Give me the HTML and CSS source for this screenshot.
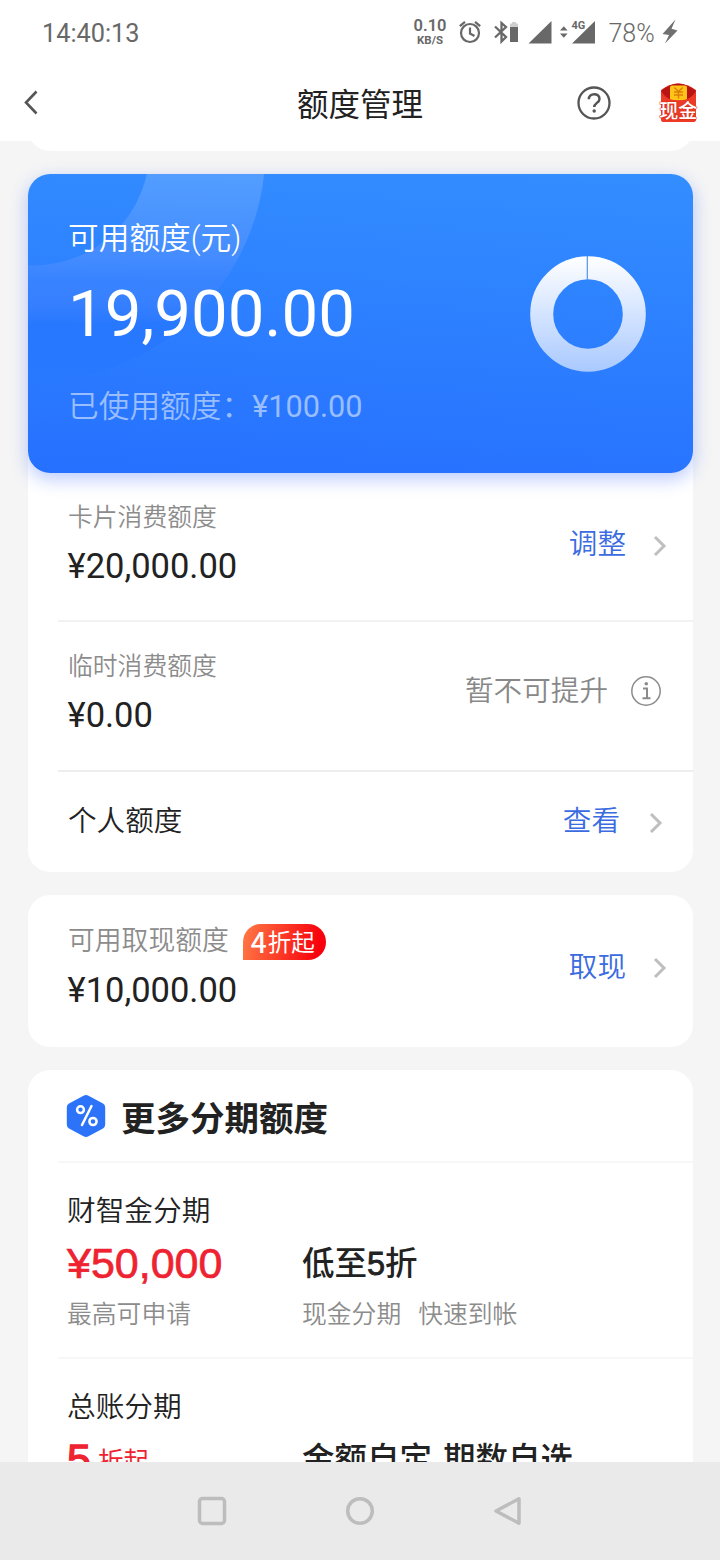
FILE: index.html
```html
<!DOCTYPE html>
<html lang="zh-CN">
<head>
<meta charset="utf-8">
<title>额度管理</title>
<link rel="stylesheet" href="styles.css">
</head>
<body>
<div class="screen">
  <div class="statusbar">
    <span class="clock">14:40:13</span>
    <div class="speed"><b class="speed-value">0.10</b><b class="speed-unit">KB/S</b></div>
    <svg class="status-icons" width="280" height="40" viewBox="440 12 280 40">
      <g fill="none" stroke="#686868" stroke-width="2.2">
        <circle cx="470" cy="33" r="9"/>
        <path d="M470 27.500v6l4.500 2.500M459.800 26.200l5.200-4.400M480.200 26.200l-5.200-4.400"/>
        <path d="M495 26.500l11 10.500-4.500 4.500V23l4.500 4-11 10.500" stroke-width="2.300"/>
      </g>
      <path d="M510 27h8v15h-8z" fill="#686868"/>
      <path d="M510 23.500h2v-1.500h4v1.500h2V27h-8z" fill="#cfcfcf"/>
      <path d="M528.500 43.500L551.500 21v22.500zM572 43.500L595 21v22.500z" fill="#686868"/>
      <path d="M560 30.500l3.800-4.300 3.800 4.300zM560 33.500l3.800 4.300 3.800-4.300z" fill="#686868"/>
      <path d="M571 19h15v8.500l-4.500 3H571z" fill="#fff"/>
      <path d="M675.500 19.500l-13 14.500 6.500 1-4 8.500 12.500-13-6-1.800z" fill="#707070"/>
      <text class="net" x="571.500" y="28.500">4G</text>
      <text class="battery" x="608.500" y="42">78%</text>
    </svg>
  </div>
  <div class="titlebar">
    <svg class="back" width="24" height="30" viewBox="20 88 24 30"><path d="M36.500 91.500L26 102.500l10.500 11" fill="none" stroke="#555" stroke-width="2.600"/></svg>
    <h1 class="title">额度管理</h1>
    <svg class="help" width="36" height="36" viewBox="0 0 36 36">
      <circle cx="18" cy="18" r="15.500" fill="none" stroke="#555" stroke-width="2.300"/>
      <path d="M12.800 14.300c0-6.800 10.700-6.800 10.700-.4 0 3.900-5.300 4.100-5.300 8.200" fill="none" stroke="#555" stroke-width="2.500"/>
      <circle cx="18.200" cy="26" r="1.700" fill="#555"/>
    </svg>
    <svg class="cash" width="42" height="42" viewBox="657 82 42 42">
      <path d="M661 90q17-13 35 0v29q0 3-3 3h-29q-3 0-3-3z" fill="#e93422"/>
      <path d="M661 91q17-15 35 0-6 10-17.500 10T661 91z" fill="#b91414"/>
      <rect x="670" y="85.500" width="17" height="15" rx="2" fill="#ffc516"/>
      <path d="M674.300 87.500l4.200 4 4.200-4M678.500 91.500v7M674 92h9M674 95h9" fill="none" stroke="#df7c0c" stroke-width="1.400"/>
      <path d="M661 94q7 6.500 17.500 6.500T696 94v25q0 3-3 3h-29q-3 0-3-3z" fill="#ec3a27"/>
      <text class="cash-text" x="659.300" y="118">现金</text>
    </svg>
  </div>
  <main class="content">
    <div class="tail"></div>
    <section class="card limits">
      <div class="hero">
        <svg class="arc" width="665" height="299" viewBox="28 174 665 299">
          <defs><linearGradient id="fade" gradientUnits="userSpaceOnUse" x1="0" y1="174" x2="0" y2="382">
            <stop offset="0" stop-color="#fff" stop-opacity=".16"/>
            <stop offset=".4" stop-color="#c8c0ff" stop-opacity=".14"/>
            <stop offset=".52" stop-color="#8090ff" stop-opacity=".12"/>
            <stop offset=".72" stop-color="#2070ff" stop-opacity=".4"/>
            <stop offset="1" stop-color="#2878ff" stop-opacity=".45"/>
          </linearGradient></defs>
          <circle cx="33" cy="149" r="174.500" fill="none" stroke="url(#fade)" stroke-width="116"/>
        </svg>
        <div class="hero-text">
          <div class="hero-label">可用额度(元)</div>
          <div class="hero-amount">19,900.00</div>
          <div class="hero-used">已使用额度：<span class="used-num">¥100.00</span></div>
        </div>
        <svg class="ring" width="116" height="116" viewBox="0 0 116 116">
          <defs><linearGradient id="ringfill" gradientUnits="userSpaceOnUse" x1="0" y1="0" x2="0" y2="116">
            <stop offset="0" stop-color="#fff"/><stop offset="1" stop-color="#a9c9ff"/>
          </linearGradient></defs>
          <circle cx="58" cy="58" r="46.300" fill="none" stroke="url(#ringfill)" stroke-width="23"/>
          <path d="M57.300 0v24" stroke="#4f93f0" stroke-width="1.200"/>
        </svg>
      </div>
      <div class="row row-first">
        <div class="info"><div class="label">卡片消费额度</div><div class="money">¥20,000.00</div></div>
        <div class="action link">调整<svg class="chev" width="14" height="22" viewBox="0 0 14 22"><path d="M2 2l9 9-9 9" fill="none" stroke="#bfbfbf" stroke-width="3"/></svg></div>
      </div>
      <div class="row row-temp">
        <div class="info"><div class="label">临时消费额度</div><div class="money">¥0.00</div></div>
        <div class="action muted">暂不可提升<svg class="tip" width="32" height="32" viewBox="0 0 32 32"><circle cx="16" cy="16" r="14.200" fill="none" stroke="#8b8b8b" stroke-width="1.500"/><path d="M13 13.500h4V23M12.500 23.200h8" fill="none" stroke="#8b8b8b" stroke-width="2"/><circle cx="16.300" cy="8.800" r="1.800" fill="#8b8b8b"/></svg></div>
      </div>
      <div class="row row-personal">
        <div class="name">个人额度</div>
        <div class="action link">查看<svg class="chev" width="14" height="22" viewBox="0 0 14 22"><path d="M2 2l9 9-9 9" fill="none" stroke="#bfbfbf" stroke-width="3"/></svg></div>
      </div>
    </section>
    <section class="card withdraw">
      <div class="info">
        <div class="label label-lg">可用取现额度<span class="badge"><span class="badge-num">4</span>折起</span></div>
        <div class="money">¥10,000.00</div>
      </div>
      <div class="action link">取现<svg class="chev" width="14" height="22" viewBox="0 0 14 22"><path d="M2 2l9 9-9 9" fill="none" stroke="#bfbfbf" stroke-width="3"/></svg></div>
    </section>
    <section class="card more">
      <div class="more-head">
        <svg width="40" height="44" viewBox="0 0 40 44">
          <path d="M17.500 1.800q2.500-1.400 5 0L37 9.600q2.200 1.300 2.200 3.800v17.200q0 2.500-2.200 3.800l-14.500 7.800q-2.500 1.400-5 0L3 34.400Q.8 33.100.8 30.600V13.400Q.8 10.900 3 9.600z" fill="#2d73fa"/>
          <g fill="none" stroke="#fff" stroke-width="2.500" stroke-linecap="round"><circle cx="14.500" cy="15.700" r="3.400"/><circle cx="27" cy="27.500" r="3.600"/><path d="M25.500 12L16 31"/></g>
        </svg>
        <h2 class="more-title">更多分期额度</h2>
      </div>
      <div class="plan">
        <div class="plan-name">财智金分期</div>
        <div class="plan-main"><span class="price">¥50,000</span><span class="offer">低至<span class="offer-num">5</span>折</span></div>
        <div class="plan-sub"><span class="sub-left">最高可申请</span><span>现金分期</span><span class="sub-second">快速到帐</span></div>
      </div>
      <div class="plan">
        <div class="plan-name">总账分期</div>
        <div class="plan-main"><span class="price rate"><span class="rate-num">5</span><span class="rate-unit">折起</span></span><span class="offer">金额自定 期数自选</span></div>
      </div>
    </section>
  </main>
  <nav class="navbar">
    <svg width="30" height="30" viewBox="0 0 30 30"><rect x="2.500" y="2.500" width="25" height="25" rx="3" fill="none" stroke="#bdbdbd" stroke-width="3.500"/></svg>
    <svg width="30" height="30" viewBox="0 0 30 30"><circle cx="15" cy="15" r="12.300" fill="none" stroke="#bdbdbd" stroke-width="3.500"/></svg>
    <svg width="30" height="30" viewBox="0 0 30 30"><path d="M3 15L26 2.800v24.400z" fill="none" stroke="#bdbdbd" stroke-width="3.500" stroke-linejoin="round"/></svg>
  </nav>
</div>
</body>
</html>
```
FILE: styles.css
```css
* { box-sizing: border-box; }
body { margin: 0; font-family: Roboto, "Noto Sans CJK SC", sans-serif; color: #222; }
svg { display: block; flex: none; }
.screen { width: 720px; height: 1560px; display: flex; flex-direction: column; background: #f5f5f5; overflow: hidden; white-space: nowrap; }

.statusbar { flex: none; height: 64px; background: #fff; display: flex; padding: 12px 0 0 42px; color: #686868; }
.clock { width: 370px; font-size: 25.300px; line-height: 43px; font-weight: 380; }
.speed { width: 36px; margin-right: -8px; display: flex; flex-direction: column; align-items: center; padding-top: 5px; }
.speed-value { font-size: 16.500px; line-height: 17px; font-weight: 600; }
.speed-unit { font-size: 11.500px; line-height: 12px; }
.net { font-size: 11px; font-weight: 700; fill: #686868; }
.battery { font-size: 25px; font-weight: 350; fill: #686868; }

.titlebar { flex: none; height: 77px; background: #fff; display: flex; align-items: flex-start; padding: 0 21px 0 20px; }
.back { margin-top: 24px; }
.title { margin: 17px 0 0 253px; width: 279px; font-size: 31.500px; line-height: 49px; font-weight: 400; }
.help { margin-top: 21px; }
.cash { margin: 18px 0 0 45px; }
.cash-text { font-size: 19px; font-weight: 500; fill: #fff; stroke: #d83020; stroke-width: 1px; paint-order: stroke; }

.content { flex: 1; min-height: 0; overflow: hidden; padding: 0 27px 0 28px; display: flex; flex-direction: column; }
.tail { flex: none; height: 24px; margin: -14px 0 23px; background: #fff; border-radius: 0 0 22px 22px; }
.card { flex: none; background: #fff; border-radius: 22px; margin-bottom: 23px; }

.hero { position: relative; height: 299px; border-radius: 22px; background: linear-gradient(176deg, #338eff, #2670ff); background: linear-gradient(184deg, #338eff, #2670ff); box-shadow: 0 6px 18px rgba(40, 90, 255, .32); display: flex; color: #fff; padding: 40px 47px 0 40px; justify-content: space-between; }
.arc { position: absolute; left: 0; top: 0; border-radius: 22px; }
.hero-text { position: relative; }
.hero-label { font-size: 30.700px; line-height: 50px; font-weight: 350; }
.hero-amount { font-size: 65.300px; line-height: 100px; height: 100px; font-weight: 400; }
.hero-used { font-size: 30.700px; line-height: 50px; margin-top: 18px; color: #98beff; font-weight: 350; }
.used-num { font-weight: 400; }
.ring { position: relative; margin-top: 42px; }

.row { display: flex; justify-content: space-between; margin-left: 30px; padding-left: 10px; }
.row-first { height: 147px; padding-top: 25px; }
.row-temp { height: 150px; border-top: 2px solid #f2f2f2; padding-top: 25px; }
.row-personal { height: 102px; border-top: 2px solid #eee; padding-top: 24px; }
.label { font-size: 24.800px; line-height: 40px; color: #8c8c8c; font-weight: 350; }
.label-lg { font-size: 26.800px; display: flex; }
.money { font-size: 34.500px; line-height: 56px; margin-left: -.5px; }
.name { font-size: 28.600px; line-height: 50px; font-weight: 350; }
.action { display: flex; font-size: 28.600px; line-height: 50px; font-weight: 350; }
.link { color: #3b6be0; }
.muted { color: #888; }
.chev { margin: 17px 26px 0 27px; }
.row-first .action { padding-top: 20px; line-height: 52px; }
.row-temp .action { padding-top: 19px; }
.row-personal .chev { margin: 16px 30px 0 29px; }
.tip { margin: 9px 31px 0 22px; }

.withdraw { height: 152px; padding: 26px 0 0 40px; display: flex; justify-content: space-between; }
.withdraw .money { line-height: 58px; }
.withdraw .action { padding-top: 21px; }
.withdraw .chev { margin-top: 15px; }
.badge { width: 83px; height: 36px; margin: 3px 0 0 14px; padding-left: 8px; border-radius: 18px 18px 18px 0; background: linear-gradient(100deg, #ff7a45, #f8000c 90%); color: #fff; font-size: 23.500px; line-height: 38px; font-weight: 400; display: flex; }
.badge-num { width: 17px; font: 500 28px/34px "Noto Sans CJK SC", sans-serif; }

.more { height: 600px; padding-left: 30px; }
.more-head { height: 91px; padding: 24px 0 0 8px; display: flex; }
.more-title { margin: 0 0 0 15px; font-size: 34.500px; line-height: 50px; font-weight: 700; }
.plan { height: 196px; border-top: 2px solid #f7f7f7; padding: 23px 0 0 9px; }
.plan-name { font-size: 28.700px; line-height: 51px; height: 50px; font-weight: 350; }
.plan-main { display: flex; height: 54px; line-height: 54px; }
.price { width: 235px; font-family: "Liberation Sans", "Noto Sans CJK SC", sans-serif; font-size: 43px; font-weight: 400; color: #ee2230; -webkit-text-stroke: .7px #ee2230; }
.offer { font-family: "Liberation Sans", "Noto Sans CJK SC", sans-serif; font-size: 32.500px; font-weight: 500; line-height: 56px; word-spacing: 2px; }
.offer-num { font-weight: 400; -webkit-text-stroke: .8px #222; }
.plan-sub { display: flex; font-size: 24.800px; line-height: 50px; color: #8c8c8c; font-weight: 350; }
.sub-left { width: 235px; }
.sub-second { margin-left: 17px; }
.rate { display: flex; }
.rate-num { width: 31px; -webkit-text-stroke: 1.300px #ee2230; }
.rate-unit { font-size: 25.500px; line-height: 58px; -webkit-text-stroke: 0; }

.navbar { flex: none; height: 98px; background: #eaeaea; display: flex; justify-content: center; gap: 118px; padding-top: 34px; }
```
